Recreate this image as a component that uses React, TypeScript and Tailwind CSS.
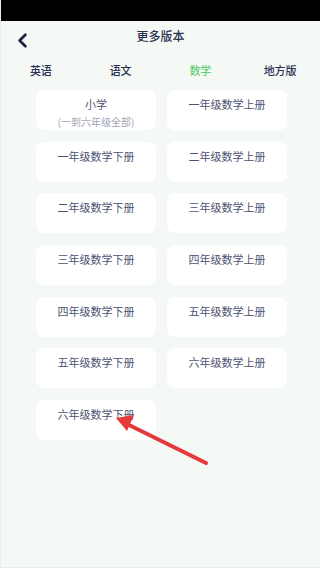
import React from "react";
import { ChevronLeft } from "lucide-react";

const tabs = ["英语", "语文", "数学", "地方版"];

const books = [
  "一年级数学上册",
  "一年级数学下册",
  "二年级数学上册",
  "二年级数学下册",
  "三年级数学上册",
  "三年级数学下册",
  "四年级数学上册",
  "四年级数学下册",
  "五年级数学上册",
  "五年级数学下册",
  "六年级数学上册",
  "六年级数学下册",
];

export default function App() {
  return (
    <div
      className="relative w-[320px] h-[568px] overflow-hidden bg-[#f5f9f6] border-l border-b border-[#e9ecea]"
      style={{ fontFamily: '"Noto Sans CJK SC", "Noto Sans", sans-serif' }}
    >
      {/* status bar */}
      <div className="h-[21px] bg-black" />

      {/* header */}
      <div className="relative h-[30px] flex items-center justify-center">
        <ChevronLeft size={23} strokeWidth={2.8} className="absolute left-[10px] top-[8px] text-[#1c2140]" />
        <span className="text-[12px] font-medium text-[#2a3150]">更多版本</span>
      </div>

      {/* tabs */}
      <div className="grid grid-cols-4 mt-[4px] h-[30px] items-center">
        {tabs.map((t) => (
          <div
            key={t}
            className={
              t === "数学"
                ? "text-center text-[11px] font-medium text-[#62cf74]"
                : "text-center text-[11px] font-medium text-[#2a3150]"
            }
          >
            {t}
          </div>
        ))}
      </div>

      {/* grid */}
      <div className="grid grid-cols-[120px_120px] gap-x-[11px] gap-y-[11.7px] pl-[35px] mt-[5px]">
        <div className="h-[40px] bg-white rounded-[8px] flex flex-col items-center pt-[6px]">
          <span className="text-[11px] leading-[16px] text-[#4c5372]">小学</span>
          <span className="text-[10px] leading-[14px] mt-[3px] text-[#9ea3b5]">(一到六年级全部)</span>
        </div>
        {books.map((b, i) => (
          <div
            key={i}
            className="h-[40px] bg-white rounded-[8px] flex justify-center pt-[6px]"
          >
            <span className="text-[11px] leading-[16px] text-[#4c5372]">{b}</span>
          </div>
        ))}
      </div>

      {/* arrow annotation */}
      <svg className="absolute left-0 top-0" width="320" height="568" viewBox="0 0 320 568">
        <line x1="205" y1="463" x2="126" y2="424" stroke="#e5393a" strokeWidth="4" strokeLinecap="round" />
        <polygon points="115,418 133,415 126,431" fill="#e5393a" />
      </svg>
    </div>
  );
}
